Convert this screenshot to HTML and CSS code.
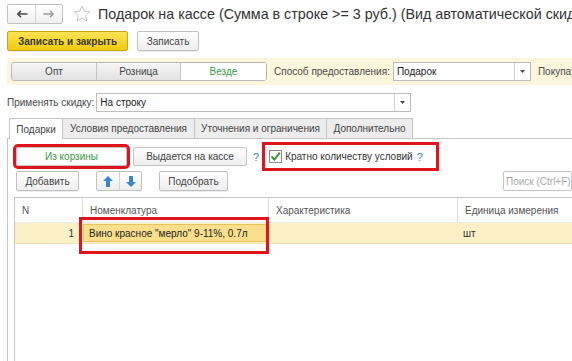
FILE: index.html
```html
<!DOCTYPE html>
<html lang="ru">
  <head>
    <meta charset="UTF-8" />
    <title>Подарок на кассе</title>
    <link rel="stylesheet" href="styles.css">
  </head>
  <body>
    <div class="window">
      <!-- Title bar -->
      <header class="titlebar">
        <div class="nav">
          <span class="nav-btn">
            <svg width="12" height="8" viewBox="0 0 12 8"><path d="M11.5 4H2M5 0.8L1.8 4L5 7.2" stroke="#4a4a4a" stroke-width="1.6" fill="none"/></svg>
          </span>
          <span class="nav-btn">
            <svg width="12" height="8" viewBox="0 0 12 8"><path d="M0.5 4H10M7 0.8L10.2 4L7 7.2" stroke="#9a9a9a" stroke-width="1.4" fill="none"/></svg>
          </span>
        </div>
        <svg class="star" width="18" height="18" viewBox="0 0 18 18">
          <path d="M9 1.2l2.3 5.1 5.5 0.5-4.2 3.7 1.3 5.5L9 13.1 4.1 16l1.3-5.5L1.2 6.8l5.5-0.5z" fill="none" stroke="#c4c4c4" stroke-width="1"/>
        </svg>
        <h1 class="title">Подарок на кассе (Сумма в строке &gt;= 3 руб.) (Вид автоматической скидки)</h1>
      </header>

      <!-- Command bar -->
      <div class="commands">
        <button class="btn btn--primary">Записать и закрыть</button>
        <button class="btn btn--save">Записать</button>
      </div>

      <!-- Filter bar -->
      <div class="filterbar">
        <div class="segmented">
          <span class="seg">Опт</span>
          <span class="seg">Розница</span>
          <span class="seg seg--on">Везде</span>
        </div>
        <span class="field-label field-label--method">Способ предоставления:</span>
        <div class="select select--method">
          <span class="select-value">Подарок</span>
          <span class="select-drop"><svg width="5" height="3" viewBox="0 0 5 3"><path d="M0 0h5L2.5 3z" fill="#444"/></svg></span>
        </div>
        <span class="field-label field-label--buyer">Покупатель:</span>
      </div>

      <!-- Apply discount -->
      <div class="apply-row">
        <span class="field-label">Применять скидку:</span>
        <div class="select select--apply">
          <span class="select-value">На строку</span>
          <span class="select-drop"><svg width="5" height="3" viewBox="0 0 5 3"><path d="M0 0h5L2.5 3z" fill="#444"/></svg></span>
        </div>
      </div>

      <!-- Tabs -->
      <div class="tabs">
        <span class="tab tab--active tab--gifts">Подарки</span>
        <span class="tab tab--conditions">Условия предоставления</span>
        <span class="tab tab--limits">Уточнения и ограничения</span>
        <span class="tab tab--extra">Дополнительно</span>
      </div>

      <div class="tabpanel">
        <div class="gift-row">
          <span class="choice choice--on">Из корзины</span>
          <span class="choice choice--cash">Выдается на кассе</span>
          <span class="help help--source">?</span>
          <div class="check-frame">
            <span class="checkbox">
              <svg width="11" height="11" viewBox="0 0 11 11"><path d="M1.5 5.5L4.3 8.6L9.8 1.6" stroke="#3a9a3a" stroke-width="2" fill="none"/></svg>
            </span>
            <span class="check-text">Кратно количеству условий</span>
            <span class="help">?</span>
          </div>
        </div>

        <div class="toolbar">
          <button class="btn btn--add">Добавить</button>
          <div class="updown">
            <span class="updown-btn">
              <svg width="10" height="11" viewBox="0 0 10 11"><path d="M5 0L10 5H7V11H3V5H0z" fill="#3b86d4"/></svg>
            </span>
            <span class="updown-btn">
              <svg width="10" height="11" viewBox="0 0 10 11"><path d="M5 11L10 6H7V0H3V6H0z" fill="#3b86d4"/></svg>
            </span>
          </div>
          <button class="btn btn--pick">Подобрать</button>
          <div class="search">Поиск (Ctrl+F)</div>
        </div>

        <div class="grid">
          <div class="grid-head">
            <span class="cell">N</span>
            <span class="cell cell--sep">Номенклатура</span>
            <span class="cell cell--sep">Характеристика</span>
            <span class="cell cell--sep">Единица измерения</span>
          </div>
          <div class="grid-row">
            <span class="cell cell--num">1</span>
            <span class="cell cell--current">Вино красное "мерло" 9-11%, 0.7л</span>
            <span class="cell"></span>
            <span class="cell cell--unit">шт</span>
          </div>
        </div>
      </div>
    </div>
  </body>
</html>
```

FILE: styles.css
```css
/* Reset */
* {
  margin: 0;
  padding: 0;
  box-sizing: border-box;
}

body {
  font-family: "Liberation Sans", Arial, sans-serif;
  font-size: 10px;
  color: #333;
  background: #fff;
  overflow: hidden;
}

button {
  font: inherit;
  color: inherit;
}

/* Window */
.window {
  width: 572px;
  height: 361px;
  display: flex;
  flex-direction: column;
  padding: 4px 0 0 7px;
  overflow: hidden;
  white-space: nowrap;
}

/* Title bar */
.titlebar {
  display: flex;
  align-items: center;
  height: 20px;
}

.nav {
  display: flex;
  height: 20px;
  border: 1px solid #c2c2c2;
  border-radius: 2px;
  background: linear-gradient(#ffffff, #efefef);
}

.nav-btn {
  width: 27px;
  display: flex;
  align-items: center;
  justify-content: center;
}

.nav-btn + .nav-btn {
  border-left: 1px solid #d4d4d4;
}

.star {
  margin-left: 10px;
  flex-shrink: 0;
}

.title {
  font-size: 14.3px;
  font-weight: normal;
  color: #333;
  margin-left: 7px;
}

/* Buttons */
.btn {
  height: 20px;
  border: 1px solid #c0c0c0;
  border-radius: 2px;
  background: linear-gradient(#ffffff, #eeeeee);
  box-shadow: 0 1px 1px rgba(0, 0, 0, 0.08);
  text-align: center;
  flex-shrink: 0;
  color: #444;
}

.btn--primary {
  width: 121px;
  font-weight: bold;
  color: #3a3a3a;
  background: linear-gradient(#fbe355, #f1cb10);
  border-color: #c8a70c;
}

.btn--save {
  width: 62px;
}

.commands {
  display: flex;
  gap: 9px;
  margin-top: 7px;
}

/* Filter bar */
.filterbar {
  display: flex;
  align-items: center;
  height: 27px;
  margin-top: 7px;
  padding-left: 4px;
  background: #fcf6dc;
  overflow: hidden;
}

.segmented {
  display: flex;
  height: 19px;
  border: 1px solid #b8b8b8;
  border-radius: 3px;
  overflow: hidden;
  flex-shrink: 0;
}

.seg {
  width: 84px;
  display: flex;
  align-items: center;
  justify-content: center;
  color: #444;
  background: linear-gradient(#f6f6f6, #e2e2e2);
}

.seg + .seg {
  border-left: 1px solid #c4c4c4;
}

.seg--on {
  width: 86px;
  background: #fff;
  color: #3c9a48;
}

.field-label {
  color: #4a4a4a;
  flex-shrink: 0;
}

.field-label--method {
  margin-left: 7px;
}

.field-label--buyer {
  margin-left: 7px;
}

.select {
  display: flex;
  height: 19px;
  border: 1px solid #bdbdbd;
  background: #fff;
  flex-shrink: 0;
}

.select-value {
  flex: 1;
  padding-left: 3px;
  display: flex;
  align-items: center;
  color: #222;
}

.select-drop {
  width: 16px;
  border-left: 1px solid #d0d0d0;
  display: flex;
  align-items: center;
  justify-content: center;
}

.select--method {
  width: 138px;
  margin-left: 3px;
}

.select--apply {
  width: 315px;
  margin-left: 2px;
}

/* Apply row */
.apply-row {
  display: flex;
  align-items: center;
  height: 20px;
  margin-top: 7px;
}

/* Tabs */
.tabs {
  display: flex;
  height: 20px;
  margin-top: 6px;
  padding-left: 2px;
}

.tab {
  display: flex;
  align-items: center;
  justify-content: center;
  border: 1px solid #c6c6c6;
  border-bottom: none;
  background: #ededed;
  color: #444;
  margin-right: -1px;
}

.tab--active {
  background: #fff;
  height: 21px;
  position: relative;
  z-index: 1;
}

.tab--gifts { width: 54px; }
.tab--conditions { width: 133px; }
.tab--limits { width: 133px; }
.tab--extra { width: 87px; }

.tabpanel {
  flex: 1;
  display: flex;
  flex-direction: column;
  border-left: 1px solid #c6c6c6;
  border-top: 1px solid #c6c6c6;
  padding: 3px 0 0 6px;
}

/* Gift source row */
.gift-row {
  display: flex;
  align-items: center;
  height: 29px;
}

.choice {
  height: 19px;
  display: flex;
  align-items: center;
  justify-content: center;
  border: 1px solid #c4c4c4;
  border-radius: 2px;
  background: linear-gradient(#ffffff, #eeeeee);
  color: #444;
}

.choice--on {
  width: 111px;
  margin-left: 2px;
  background: #fff;
  color: #3c9a48;
  outline: 3px solid #e0141c;
}

.choice--cash {
  width: 114px;
  margin-left: 6px;
}

.help {
  color: #3b7cc6;
  font-size: 11px;
  margin-left: 4px;
}

.help--source {
  margin-left: 6px;
}

.check-frame {
  display: flex;
  align-items: center;
  width: 177px;
  height: 29px;
  margin-left: 3px;
  border: 3px solid #e0141c;
  padding-left: 4px;
}

.checkbox {
  width: 13px;
  height: 13px;
  border: 1px solid #8c8c8c;
  background: #fff;
  display: flex;
  align-items: center;
  justify-content: center;
}

.check-text {
  margin-left: 3px;
  color: #333;
}

/* Toolbar */
.toolbar {
  display: flex;
  align-items: center;
  height: 20px;
}

.btn--add {
  width: 63px;
  margin-left: 2px;
}

.updown {
  display: flex;
  height: 20px;
  margin-left: 17px;
  border: 1px solid #c0c0c0;
  border-radius: 2px;
  background: linear-gradient(#ffffff, #eeeeee);
}

.updown-btn {
  width: 22px;
  display: flex;
  align-items: center;
  justify-content: center;
}

.updown-btn + .updown-btn {
  border-left: 1px solid #d4d4d4;
}

.btn--pick {
  width: 69px;
  margin-left: 17px;
}

.search {
  margin-left: auto;
  width: 69px;
  height: 20px;
  border: 1px solid #c4c4c4;
  border-radius: 2px;
  color: #a8a8a8;
  padding-left: 2px;
  display: flex;
  align-items: center;
  overflow: hidden;
}

/* Grid */
.grid {
  flex: 1;
  margin-top: 6px;
  border-left: 1px solid #c6c6c6;
  border-top: 1px solid #c6c6c6;
}

.grid-head,
.grid-row {
  display: grid;
  grid-template-columns: 67px 186px 189px 1fr;
}

.grid-head {
  height: 25px;
  border-bottom: 1px solid #ececec;
  color: #555;
}

.grid-head .cell {
  display: flex;
  align-items: center;
  padding-left: 7px;
}

.cell--sep {
  border-left: 1px solid #dcdcdc;
}

.grid-row {
  height: 21px;
  background: #fcf0c6;
  border-bottom: 1px solid #f1e4b6;
}

.grid-row .cell {
  display: flex;
  align-items: center;
}

.cell--num {
  justify-content: flex-end;
  padding-right: 8px;
}

.cell--current {
  position: relative;
  margin: 1px 0 1px 1px;
  padding-left: 5px;
  background: #f9df8c;
  border: 1px solid #e6c35c;
  color: #222;
}

/* Annotation frame over the current cell */
.cell--current::after {
  content: "";
  position: absolute;
  top: -8px;
  left: -5px;
  right: -2px;
  bottom: -13px;
  border: 3px solid #e0141c;
}

.cell--unit {
  padding-left: 6px;
}
```
